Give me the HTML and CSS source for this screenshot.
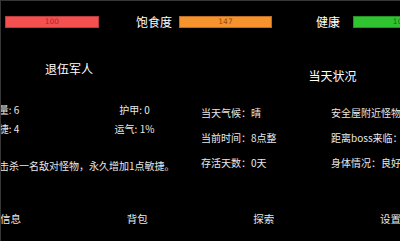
FILE: index.html
```html
<!DOCTYPE html>
<html lang="zh-CN">
<head>
<meta charset="utf-8">
<title>状态</title>
<link rel="stylesheet" href="styles.css">
</head>
<body>
<div class="screen">
  <header class="topbar">
    <div class="bar bar-red"><span>100</span></div>
    <span class="stat-label label-food">饱食度</span>
    <div class="bar bar-orange"><span>147</span></div>
    <span class="stat-label label-health">健康</span>
    <div class="bar bar-green"><span>100</span></div>
  </header>
  <main class="main">
    <section class="panel panel-left">
      <h2 class="panel-title">退伍军人</h2>
      <div class="attrs">
        <span>量: 6</span>
        <span>护甲: 0</span>
        <span>捷: 4</span>
        <span>运气: 1%</span>
      </div>
      <p class="desc">击杀一名敌对怪物，永久增加1点敏捷。</p>
    </section>
    <section class="panel panel-right">
      <h2 class="panel-title title-right">当天状况</h2>
      <div class="status">
        <span>当天气候：晴</span>
        <span>安全屋附近怪物</span>
        <span>当前时间：8点整</span>
        <span>距离boss来临：</span>
        <span>存活天数：0天</span>
        <span>身体情况：良好</span>
      </div>
    </section>
  </main>
  <nav class="nav">
    <span>信息</span>
    <span>背包</span>
    <span>探索</span>
    <span>设置</span>
  </nav>
</div>
</body>
</html>
```

FILE: styles.css
```css
html, body {
  margin: 0;
  padding: 0;
}
body {
  width: 400px;
  height: 241px;
  overflow: hidden;
  background: #000;
  box-sizing: border-box;
  border-top: 1px solid #363636;
  border-left: 1px solid #363636;
  font-family: "Noto Sans CJK SC", "Noto Sans", sans-serif;
  color: #e8e8e8;
}
.screen {
  width: 399px;
  height: 240px;
  overflow: hidden;
}
.topbar {
  display: flex;
  align-items: center;
  height: 28px;
  padding-top: 14px;
  box-sizing: border-box;
  white-space: nowrap;
}
.bar {
  flex: none;
  height: 12px;
  box-sizing: border-box;
  border: 1px solid rgba(0, 0, 0, 0.25);
  display: flex;
  align-items: center;
  justify-content: center;
  font-family: "DejaVu Sans", sans-serif;
  font-size: 7.5px;
  line-height: 10px;
}
.bar-red {
  margin-left: 4px;
  width: 94px;
  background: #f45050;
  color: #a52a2a;
}
.bar-orange {
  margin-left: 7px;
  width: 93px;
  background: #f7932f;
  color: #8f4c10;
}
.bar-green {
  margin-left: 13px;
  width: 94px;
  background: #30c530;
  color: #176c17;
}
.stat-label {
  flex: none;
  font-size: 12px;
  line-height: 12px;
  color: #fff;
}
.label-food {
  margin-left: 37px;
}
.label-health {
  margin-left: 44px;
}
.main {
  display: flex;
  align-items: flex-start;
  height: 147px;
  margin-left: -62px;
}
.panel {
  flex: none;
  width: 260px;
}
.panel-title {
  margin: 0;
  font-size: 12px;
  line-height: 16px;
  font-weight: normal;
  color: #fff;
  text-align: center;
}
.panel-left .panel-title {
  margin-top: 32px;
}
.attrs {
  display: grid;
  grid-template-columns: 140px 111px;
  margin-top: 23px;
  font-size: 10px;
  line-height: 19px;
  text-align: center;
  white-space: nowrap;
}
.desc {
  margin: 21px 0 0 60px;
  font-size: 10px;
  line-height: 14px;
  white-space: nowrap;
}
.panel-right {
  padding-left: 2px;
}
.title-right {
  margin-top: 39px;
  padding-left: 3px;
}
.status {
  display: grid;
  grid-template-columns: 130px 130px;
  margin-top: 16px;
  font-size: 10px;
  line-height: 25px;
  white-space: nowrap;
}
.nav {
  display: grid;
  grid-template-columns: repeat(4, 126.67px);
  margin-top: 36px;
  margin-left: -1px;
  font-size: 10.5px;
  line-height: 14px;
  color: #e8e8e8;
  white-space: nowrap;
}
```
